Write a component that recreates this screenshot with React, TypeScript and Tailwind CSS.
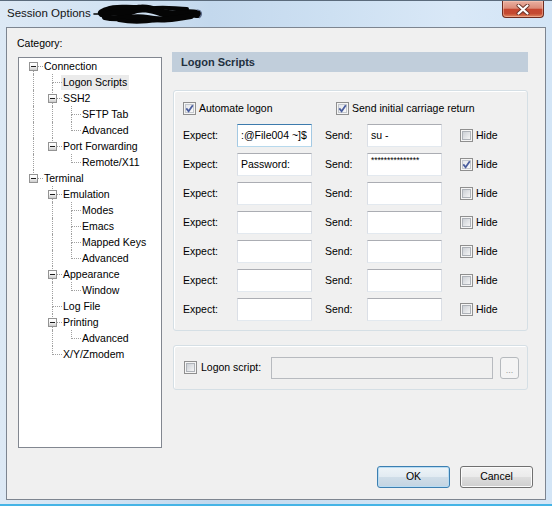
import React from "react";

type Node = {
  label: string;
  guides: boolean[];
  last?: boolean;
  first?: boolean;
  open?: boolean;
  selected?: boolean;
};

const tree: Node[] = [
  { label: "Connection", guides: [], first: true, open: true },
  { label: "Logon Scripts", guides: [true], selected: true },
  { label: "SSH2", guides: [true], open: true },
  { label: "SFTP Tab", guides: [true, true] },
  { label: "Advanced", guides: [true, true], last: true },
  { label: "Port Forwarding", guides: [true], last: true, open: true },
  { label: "Remote/X11", guides: [true, false], last: true },
  { label: "Terminal", guides: [], last: true, open: true },
  { label: "Emulation", guides: [false], open: true },
  { label: "Modes", guides: [false, true] },
  { label: "Emacs", guides: [false, true] },
  { label: "Mapped Keys", guides: [false, true] },
  { label: "Advanced", guides: [false, true], last: true },
  { label: "Appearance", guides: [false], open: true },
  { label: "Window", guides: [false, true], last: true },
  { label: "Log File", guides: [false] },
  { label: "Printing", guides: [false], open: true },
  { label: "Advanced", guides: [false, true], last: true },
  { label: "X/Y/Zmodem", guides: [false], last: true },
];

const scripts = [
  { expect: ":@File004 ~]$", send: "su -", hide: false, focus: true },
  { expect: "Password:", send: "***************", hide: true, mask: true },
  { expect: "", send: "", hide: false },
  { expect: "", send: "", hide: false },
  { expect: "", send: "", hide: false },
  { expect: "", send: "", hide: false },
  { expect: "", send: "", hide: false },
];

function Check({ checked }: { checked?: boolean }) {
  return (
    <svg width="13" height="13" viewBox="0 0 13 13" className="shrink-0">
      <defs>
        <linearGradient id="cbfill" x1="0" y1="0" x2="1" y2="1">
          <stop offset="0" stopColor="#c9cdd3" />
          <stop offset="1" stopColor="#f7f7f7" />
        </linearGradient>
        <linearGradient id="cbon" x1="0" y1="0" x2="1" y2="1">
          <stop offset="0" stopColor="#e4e6ea" />
          <stop offset="1" stopColor="#fbfbfb" />
        </linearGradient>
      </defs>
      <rect x="0.5" y="0.5" width="12" height="12" fill="#f5f5f5" stroke="#8f8f8f" />
      <rect x="2.5" y="2.5" width="8" height="8" fill={checked ? "url(#cbon)" : "url(#cbfill)"} stroke={checked ? "#c4c8ce" : "#aeb2b8"} />
      {checked && <path d="M3.3 6.4 L5.6 9.2 L9.8 3.2" fill="none" stroke="#4b5e9e" strokeWidth="1.8" />}
    </svg>
  );
}

function Expander() {
  return (
    <div className="absolute left-[5px] top-[4px] flex h-[9px] w-[9px] items-center justify-center border border-[#939393] bg-[linear-gradient(180deg,#ffffff_0%,#f7f7f7_45%,#cbcbcb_100%)]">
      <div className="h-[1px] w-[5px] bg-[#1d1d1d]" />
    </div>
  );
}

function TreeRow({ node }: { node: Node }) {
  return (
    <div className="flex h-[16px] items-center">
      {node.guides.map((g, i) => (
        <div key={i} className="flex h-full w-[19px] shrink-0">
          <div className="w-[9px] shrink-0" />
          {g && <div className="h-full border-l border-dotted border-[#a0a0a0]" />}
        </div>
      ))}
      <div className="relative flex h-full w-[19px] shrink-0">
        <div className="w-[9px] shrink-0" />
        <div className="flex flex-1 flex-col">
          <div className={node.first ? "h-[9px] border-b border-dotted border-[#a0a0a0]" : "h-[9px] border-b border-l border-dotted border-[#a0a0a0]"} />
          <div className={node.last ? "flex-1" : "flex-1 border-l border-dotted border-[#a0a0a0]"} />
        </div>
        {node.open && <Expander />}
      </div>
      <span className={node.selected ? "ml-[-1px] whitespace-nowrap bg-[#ebebeb] px-[2px] leading-[15px]" : "ml-[-1px] whitespace-nowrap px-[2px] leading-[15px]"}>
        {node.label}
      </span>
    </div>
  );
}

function Field({ text, focus, mask }: { text: string; focus?: boolean; mask?: boolean }) {
  const border = focus
    ? "border-t-[#3d7bad] border-x-[#a4c9e3] border-b-[#b7d9ed]"
    : "border-t-[#abadb3] border-x-[#dbdfe6] border-b-[#e3e9ef]";
  return (
    <div className={`flex h-[23px] w-[75px] shrink-0 overflow-hidden border bg-white px-[3px] ${border} ${mask ? "items-start" : "items-center"}`}>
      {mask ? (
        <span className="pt-[2px] text-[8.5px] leading-[9px] tracking-[-0.1px]">{text}</span>
      ) : (
        <span className="whitespace-nowrap">{text}</span>
      )}
    </div>
  );
}

function Scribble() {
  return (
    <svg width="112" height="22" viewBox="0 0 112 22" className="ml-[2px]">
      <g fill="none" stroke="#050505" strokeLinecap="round" strokeLinejoin="round">
        <path d="M1 11 L9 11" strokeWidth="1.6" />
        <path d="M9 10 C 18 4, 28 13, 38 8 S 58 6, 70 10 S 92 8, 104 11" strokeWidth="8" />
        <path d="M12 14 C 26 18, 40 12, 54 15 S 80 16, 98 13" strokeWidth="6" />
        <path d="M14 6 C 24 2, 34 5, 46 4" strokeWidth="4.5" />
        <path d="M26 17 C 40 20, 52 19, 64 17" strokeWidth="4" />
        <path d="M56 6 C 70 3, 82 6, 94 6" strokeWidth="4" />
      </g>
      <path d="M104 7 C 109 7, 110 12, 106 15" fill="none" stroke="#5a6a8a" strokeWidth="1.2" />
    </svg>
  );
}

export default function App() {
  return (
    <div className="relative h-[506px] w-[552px] overflow-hidden border-t border-[#5b6b7c] bg-[linear-gradient(90deg,#dde9f5_0%,#d3e3f3_18%,#c3d8ed_38%,#cde0f2_60%,#d9e8f7_82%,#d3e5f6_100%)] font-['Liberation_Sans',Arial,sans-serif] text-[10.5px] text-black">
      {/* title bar */}
      <div className="flex h-[26px] items-start">
        <div className="flex h-[26px] items-center pl-[7px] text-[11.5px] text-[#141414]">
          <span>Session Options</span>
          <Scribble />
        </div>
        <div className="ml-auto mr-[8px] flex h-[17px] w-[42px] items-center justify-center rounded-b-[4px] border border-t-0 border-[#6e2b1f] bg-[linear-gradient(180deg,#eab0a1_0%,#dc8b78_45%,#c6462f_52%,#c44a31_78%,#e0865f_100%)] shadow-[inset_0_0_0_1px_rgba(255,210,190,0.45)]">
          <svg width="14" height="11" viewBox="0 0 14 11">
            <path d="M2.5 1.5 L11.5 9.5 M11.5 1.5 L2.5 9.5" stroke="#6a3328" strokeWidth="4" strokeLinecap="round" />
            <path d="M2.5 1.5 L11.5 9.5 M11.5 1.5 L2.5 9.5" stroke="#ffffff" strokeWidth="2.2" strokeLinecap="round" />
          </svg>
        </div>
      </div>

      {/* client area */}
      <div className="ml-[6px] h-[473px] w-[540px] border border-[#7d8590] bg-[#f0f0f0]">
        <div className="flex items-start">
          <div className="ml-[11px] flex w-[144px] flex-col pt-[9px]">
            <span className="ml-[-1px] h-[13px] leading-[13px]">Category:</span>
            <div className="mt-[7px] h-[391px] border border-[#828790] bg-white pl-[5px]">
              {tree.map((n, i) => (
                <TreeRow key={i} node={n} />
              ))}
            </div>
          </div>

          <div className="ml-[10px] flex w-[356px] flex-col pt-[24px]">
            <div className="flex h-[20px] items-center bg-[#c1cedb] px-[9px] text-[11px] font-bold text-[#22303e]">Logon Scripts</div>

            <div className="ml-[1px] mt-[18px] flex h-[241px] w-[355px] flex-col rounded-[3px] border border-[#d5dfe5] pl-[9px] pt-[11px] shadow-[inset_1px_1px_0_#ffffff]">
              <div className="flex h-[13px] items-center">
                <div className="flex w-[153px] items-center gap-[3px]">
                  <Check checked />
                  <span>Automate logon</span>
                </div>
                <div className="flex items-center gap-[3px]">
                  <Check checked />
                  <span>Send initial carriage return</span>
                </div>
              </div>
              <div className="mt-[9px] flex flex-col gap-[6px]">
                {scripts.map((s, i) => (
                  <div key={i} className="flex items-center">
                    <span className="w-[54px] shrink-0">Expect:</span>
                    <Field text={s.expect} focus={s.focus} />
                    <span className="ml-[13px] w-[42px] shrink-0">Send:</span>
                    <Field text={s.send} mask={s.mask} />
                    <div className="ml-[18px] flex items-center gap-[3px]">
                      <Check checked={s.hide} />
                      <span>Hide</span>
                    </div>
                  </div>
                ))}
              </div>
            </div>

            <div className="ml-[1px] mt-[14px] flex h-[45px] w-[355px] items-center rounded-[3px] border border-[#d5dfe5] pl-[10px] shadow-[inset_1px_1px_0_#ffffff]">
              <Check />
              <span className="ml-[4px] w-[70px] shrink-0">Logon script:</span>
              <div className="h-[22px] w-[222px] border border-[#b7babf] bg-[#f0f0f0]" />
              <div className="ml-[7px] flex h-[22px] w-[19px] items-end justify-center rounded-[3px] border border-[#b5b9bd] bg-[#f4f4f4] pb-[3px] text-[9px] leading-[9px] text-[#9a9a9a]">
                ...
              </div>
            </div>
          </div>
        </div>

        <div className="mr-[12px] mt-[18px] flex justify-end gap-[10px]">
          <div className="flex h-[22px] w-[73px] items-center justify-center rounded-[3px] border border-[#3c7fb1] bg-[linear-gradient(180deg,#eef4f8_0%,#e2ebf2_48%,#cfdde8_52%,#c3d4e2_100%)] shadow-[inset_0_0_0_1px_#b8dcf3]">
            OK
          </div>
          <div className="flex h-[22px] w-[73px] items-center justify-center rounded-[3px] border border-[#707070] bg-[linear-gradient(180deg,#f3f3f3_0%,#ebebeb_48%,#dddddd_52%,#cfcfcf_100%)] shadow-[inset_0_0_0_1px_#fbfbfb]">
            Cancel
          </div>
        </div>
      </div>

      <div className="mt-[4px] h-[2px] bg-[#45b4e6]" />
    </div>
  );
}
